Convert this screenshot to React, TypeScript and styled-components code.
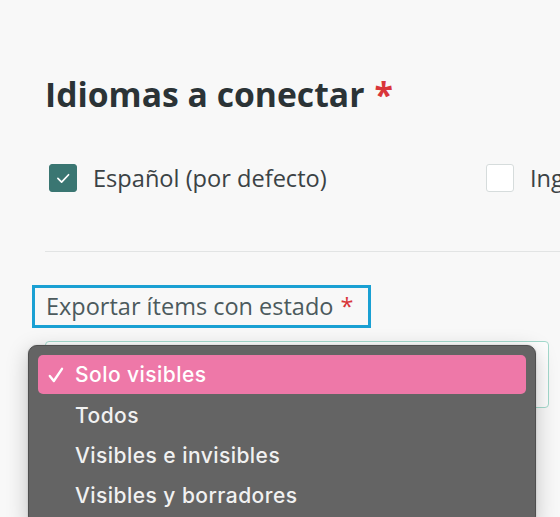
import React from "react";
import styled, { createGlobalStyle } from "styled-components";

const GlobalStyle = createGlobalStyle`
  html, body {
    margin: 0;
    padding: 0;
    background: #f8f8f8;
  }
  body {
    font-family: "Open Sans", "Noto Sans", sans-serif;
    overflow: hidden;
  }
`;

const Page = styled.div`
  position: relative;
  height: 517px;
  width: 560px;
  overflow: hidden;
  padding-left: 45px;
  box-sizing: border-box;
`;

const Heading = styled.h2`
  margin: 74px 0 0 0;
  font-size: 33.7px;
  line-height: 40px;
  font-weight: 700;
  color: #2b3336;
  white-space: nowrap;
`;

const Required = styled.span<{ $gap?: number }>`
  color: #d9363a;
  margin-left: ${(p) => (p.$gap ? p.$gap : 10)}px;
`;

const Options = styled.div`
  display: grid;
  grid-template-columns: 437px auto;
  margin: 50px 0 0 4px;
  align-items: center;
  white-space: nowrap;
`;

const Option = styled.label`
  display: flex;
  align-items: center;
  gap: 16px;
  font-size: 23.6px;
  line-height: 28px;
  color: #3b4245;
`;

const Box = styled.span<{ $checked?: boolean }>`
  display: inline-flex;
  align-items: center;
  justify-content: center;
  width: 28px;
  height: 28px;
  box-sizing: border-box;
  border-radius: 3px;
  background: ${(p) => (p.$checked ? "#3a7672" : "#ffffff")};
  border: 1px solid ${(p) => (p.$checked ? "#3a7672" : "#d6dcdc")};
  flex: none;
`;

const Divider = styled.hr`
  margin: 59px 0 0 0;
  border: none;
  border-top: 1px solid #e2e4e4;
  width: 600px;
`;

const Field = styled.div`
  margin-top: 33px;
  display: flex;
  flex-direction: column;
  align-items: flex-start;
`;

const FieldLabel = styled.div`
  margin-left: -13px;
  border: 3px solid #1aa0d3;
  padding: 0 15px 0 11px;
  font-size: 23.5px;
  line-height: 37px;
  color: #4c5a5d;
  white-space: nowrap;
`;

const SelectBox = styled.div`
  margin-top: 13px;
  width: 504px;
  height: 67px;
  box-sizing: border-box;
  border: 1px solid #a3d9cc;
  border-radius: 4px;
  background: #fdfdfd;
`;

const Menu = styled.ul`
  position: absolute;
  left: 28px;
  top: 345px;
  width: 508px;
  box-sizing: border-box;
  margin: 0;
  padding: 9px;
  list-style: none;
  background: #646464;
  border: 1px solid #4f4f4f;
  border-radius: 9px;
  box-shadow: 0 6px 22px rgba(0, 0, 0, 0.22), 0 0 2px rgba(0, 0, 0, 0.2);
  font-family: Inter, "Liberation Sans", sans-serif;
`;

const MenuItem = styled.li<{ $selected?: boolean }>`
  position: relative;
  height: ${(p) => (p.$selected ? 39 : 40)}px;
  margin-bottom: ${(p) => (p.$selected ? 1 : 0)}px;
  display: flex;
  align-items: center;
  padding-left: 37px;
  border-radius: 5px;
  font-size: 21px;
  font-weight: 500;
  letter-spacing: 0.45px;
  color: ${(p) => (p.$selected ? "#ffffff" : "#f1f1f1")};
  background: ${(p) => (p.$selected ? "#ee78a8" : "transparent")};
`;

const Tick = styled.svg`
  position: absolute;
  left: 10px;
  top: 12px;
`;

const items = ["Solo visibles", "Todos", "Visibles e invisibles", "Visibles y borradores"];

export default function App() {
  return (
    <>
      <GlobalStyle />
      <Page>
        <Heading>
          Idiomas a conectar<Required $gap={10}>*</Required>
        </Heading>
        <Options>
          <Option>
            <Box $checked>
              <svg width="28" height="28" viewBox="0 0 28 28">
                <path d="M8.5 14.5 L12.5 18.5 L20 10.5" fill="none" stroke="#ffffff" strokeWidth="1.8" strokeLinecap="round" strokeLinejoin="round" />
              </svg>
            </Box>
            Español (por defecto)
          </Option>
          <Option>
            <Box />
            Inglés
          </Option>
        </Options>
        <Divider />
        <Field>
          <FieldLabel>
            Exportar ítems con estado<Required $gap={7}>*</Required>
          </FieldLabel>
          <SelectBox />
        </Field>
        <Menu>
          {items.map((it, i) => (
            <MenuItem key={it} $selected={i === 0}>
              {i === 0 && (
                <Tick width="16" height="16" viewBox="0 0 16 16">
                  <path d="M1.8 9 L5.8 14 L14 1.8" fill="none" stroke="#ffffff" strokeWidth="2.4" strokeLinecap="round" strokeLinejoin="round" />
                </Tick>
              )}
              {it}
            </MenuItem>
          ))}
        </Menu>
      </Page>
    </>
  );
}
